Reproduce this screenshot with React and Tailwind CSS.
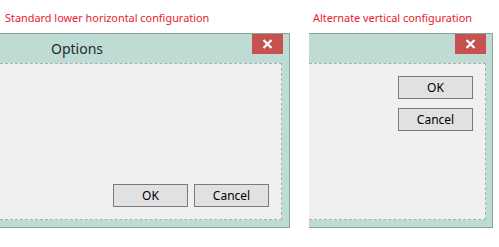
export default function App() {
  const font = { fontFamily: '"Noto Sans", "Open Sans", sans-serif' };
  const Btn = ({ children }) => (
    <div className="w-[75px] h-[23px] border border-[#7a7a7a] bg-[#e1e1e1] flex items-center justify-center text-[12px] text-black leading-none">
      {children}
    </div>
  );
  const Close = () => (
    <div className="absolute top-0 right-[6px] w-[31px] h-[20px] bg-[#c75050] flex items-center justify-center">
      <svg width="11" height="10" viewBox="0 0 11 10">
        <path d="M1.5 1 L9.5 9 M9.5 1 L1.5 9" stroke="white" strokeWidth="2.2" />
      </svg>
    </div>
  );
  return (
    <div className="w-[499px] h-[247px] bg-white flex" style={font}>
      <div className="w-[290px] flex flex-col">
        <div className="h-[33px] pl-[5px] pt-[11px] text-[10.9px] leading-[14px] text-[#e8202e]">
          Standard lower horizontal configuration
        </div>
        <div className="h-[195px] border-t border-r border-b border-[#8aa39b] bg-[#bfdcd4] flex flex-col">
          <div className="h-[29px] relative flex items-center pl-[51px] text-[14px] text-[#1e2a30]">
            Options
            <Close />
          </div>
          <div className="w-[282px] h-[157px] bg-[#f0f0f0] border-t border-r border-b border-dashed border-[#a8b0ad] flex items-end justify-end gap-[6px] pr-[12px] pb-[12px]">
            <Btn>OK</Btn>
            <Btn>Cancel</Btn>
          </div>
        </div>
      </div>
      <div className="w-[209px] flex flex-col">
        <div className="h-[33px] pl-[23px] pt-[11px] text-[10.9px] leading-[14px] text-[#e8202e]">
          Alternate vertical configuration
        </div>
        <div className="ml-[19px] w-[184px] h-[195px] border-t border-r border-b border-[#8aa39b] bg-[#bfdcd4] flex flex-col">
          <div className="h-[29px] relative">
            <Close />
          </div>
          <div className="w-[177px] h-[157px] bg-[#f0f0f0] border-t border-r border-b border-dashed border-[#a8b0ad] flex flex-col items-end gap-[9px] pr-[12px] pt-[12px]">
            <Btn>OK</Btn>
            <Btn>Cancel</Btn>
          </div>
        </div>
      </div>
    </div>
  );
}
